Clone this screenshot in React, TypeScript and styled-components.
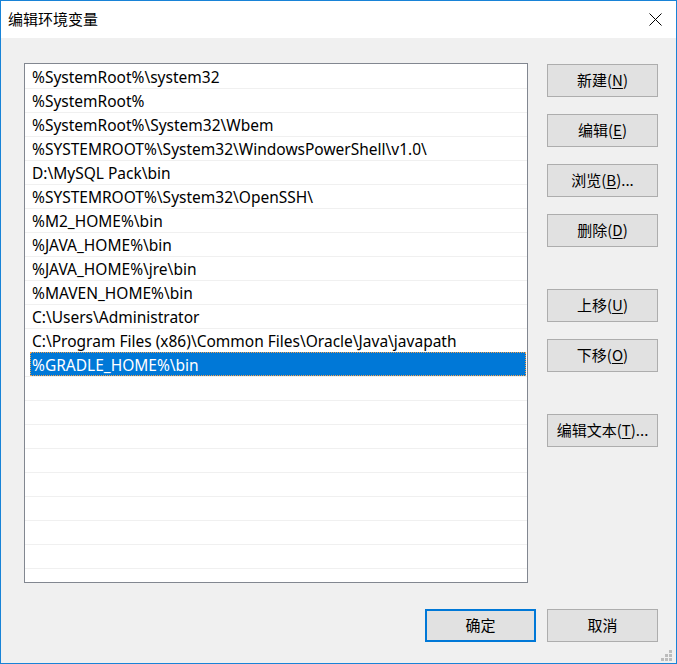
import React from "react";
import styled, { createGlobalStyle } from "styled-components";

const GlobalStyle = createGlobalStyle`
  html, body {
    margin: 0;
    padding: 0;
    background: #ffffff;
  }
  body {
    font-family: "Noto Sans", "Noto Sans CJK SC", sans-serif;
  }
`;

const Window = styled.div`
  position: relative;
  width: 677px;
  height: 664px;
  box-sizing: border-box;
  border: 1px solid #1883d7;
  background: #f0f0f0;
  display: flex;
  flex-direction: column;
`;

const TitleBar = styled.div`
  height: 37px;
  flex: none;
  background: #ffffff;
  display: flex;
  align-items: center;
  justify-content: space-between;
  padding: 0 14px 0 7px;
`;

const Title = styled.div`
  font-family: "Noto Sans CJK SC", "Noto Sans", sans-serif;
  font-size: 15px;
  color: #000000;
  line-height: 20px;
  margin-top: -1px;
`;

const CloseGlyph = styled.svg`
  display: block;
  width: 13px;
  height: 13px;
`;

const Body = styled.div`
  flex: 1;
  display: flex;
  flex-direction: column;
  padding: 25px 18px 21px 23px;
`;

const Main = styled.div`
  display: flex;
  gap: 19px;
`;

const ListBox = styled.div`
  width: 504px;
  height: 520px;
  box-sizing: border-box;
  border: 1px solid #828790;
  background: #ffffff;
  overflow: hidden;
`;

const Row = styled.div<{ $first?: boolean; $selected?: boolean }>`
  height: 24px;
  box-sizing: border-box;
  padding: 3px 0 0 ${(p) => (p.$selected ? "2px" : "7px")};
  line-height: 21px;
  margin: ${(p) => (p.$selected ? "0 1px 0 5px" : "0")};
  font-family: "Noto Sans", sans-serif;
  font-size: 15.5px;
  white-space: nowrap;
  color: ${(p) => (p.$selected ? "#ffffff" : "#000000")};
  background: ${(p) => (p.$selected ? "#0078d7" : "transparent")};
  box-shadow: ${(p) => (p.$first || p.$selected ? "none" : "inset 0 1px 0 #f0f0f0")};
  outline: ${(p) => (p.$selected ? "1px dotted #f7a24a" : "none")};
  outline-offset: -1px;
`;

const SideColumn = styled.div`
  width: 111px;
  display: flex;
  flex-direction: column;
  gap: 17px;
  padding-top: 1px;
`;

const Button = styled.button<{ $sep?: boolean; $default?: boolean }>`
  width: 111px;
  height: 33px;
  box-sizing: border-box;
  margin: ${(p) => (p.$sep ? "25px 0 0 0" : "0")};
  padding: 0 0 1px 0;
  background: #e1e1e1;
  border: ${(p) => (p.$default ? "2px solid #0078d7" : "1px solid #adadad")};
  border-radius: 0;
  font-family: "Noto Sans CJK SC", "Noto Sans", sans-serif;
  font-size: 15px;
  line-height: 20px;
  color: #000000;
  display: flex;
  align-items: center;
  justify-content: center;
  cursor: default;
  u {
    text-decoration: underline;
    text-underline-offset: 2px;
    text-decoration-thickness: 1px;
  }
`;

const Footer = styled.div`
  display: flex;
  justify-content: flex-end;
  gap: 11px;
  margin-top: 26px;
`;

const Grip = styled.svg`
  position: absolute;
  right: 3px;
  bottom: 1px;
  width: 12px;
  height: 12px;
`;

const paths = [
  "%SystemRoot%\\system32",
  "%SystemRoot%",
  "%SystemRoot%\\System32\\Wbem",
  "%SYSTEMROOT%\\System32\\WindowsPowerShell\\v1.0\\",
  "D:\\MySQL Pack\\bin",
  "%SYSTEMROOT%\\System32\\OpenSSH\\",
  "%M2_HOME%\\bin",
  "%JAVA_HOME%\\bin",
  "%JAVA_HOME%\\jre\\bin",
  "%MAVEN_HOME%\\bin",
  "C:\\Users\\Administrator",
  "C:\\Program Files (x86)\\Common Files\\Oracle\\Java\\javapath",
  "%GRADLE_HOME%\\bin",
];

const TOTAL_ROWS = 22;
const SELECTED = 12;

export default function App() {
  const rows = Array.from({ length: TOTAL_ROWS }, (_, i) => paths[i] ?? "");
  return (
    <>
      <GlobalStyle />
      <Window>
        <TitleBar>
          <Title>编辑环境变量</Title>
          <CloseGlyph viewBox="0 0 13 13">
            <path d="M0.5 0.5 L12.5 12.5 M12.5 0.5 L0.5 12.5" stroke="#000" strokeWidth="1" fill="none" />
          </CloseGlyph>
        </TitleBar>
        <Body>
          <Main>
            <ListBox>
              {rows.map((text, i) => (
                <Row key={i} $first={i === 0} $selected={i === SELECTED}>
                  {text || "\u00a0"}
                </Row>
              ))}
            </ListBox>
            <SideColumn>
              <Button>新建(<u>N</u>)</Button>
              <Button>编辑(<u>E</u>)</Button>
              <Button>浏览(<u>B</u>)...</Button>
              <Button>删除(<u>D</u>)</Button>
              <Button $sep>上移(<u>U</u>)</Button>
              <Button>下移(<u>O</u>)</Button>
              <Button $sep>编辑文本(<u>T</u>)...</Button>
            </SideColumn>
          </Main>
          <Footer>
            <Button $default>确定</Button>
            <Button>取消</Button>
          </Footer>
        </Body>
        <Grip viewBox="0 0 12 12">
          <rect x="8" y="0" width="3" height="3" fill="#bcbcbc" />
          <rect x="4" y="4" width="3" height="3" fill="#bcbcbc" />
          <rect x="8" y="4" width="3" height="3" fill="#bcbcbc" />
          <rect x="0" y="8" width="3" height="3" fill="#bcbcbc" />
          <rect x="4" y="8" width="3" height="3" fill="#bcbcbc" />
          <rect x="8" y="8" width="3" height="3" fill="#bcbcbc" />
        </Grip>
      </Window>
    </>
  );
}
